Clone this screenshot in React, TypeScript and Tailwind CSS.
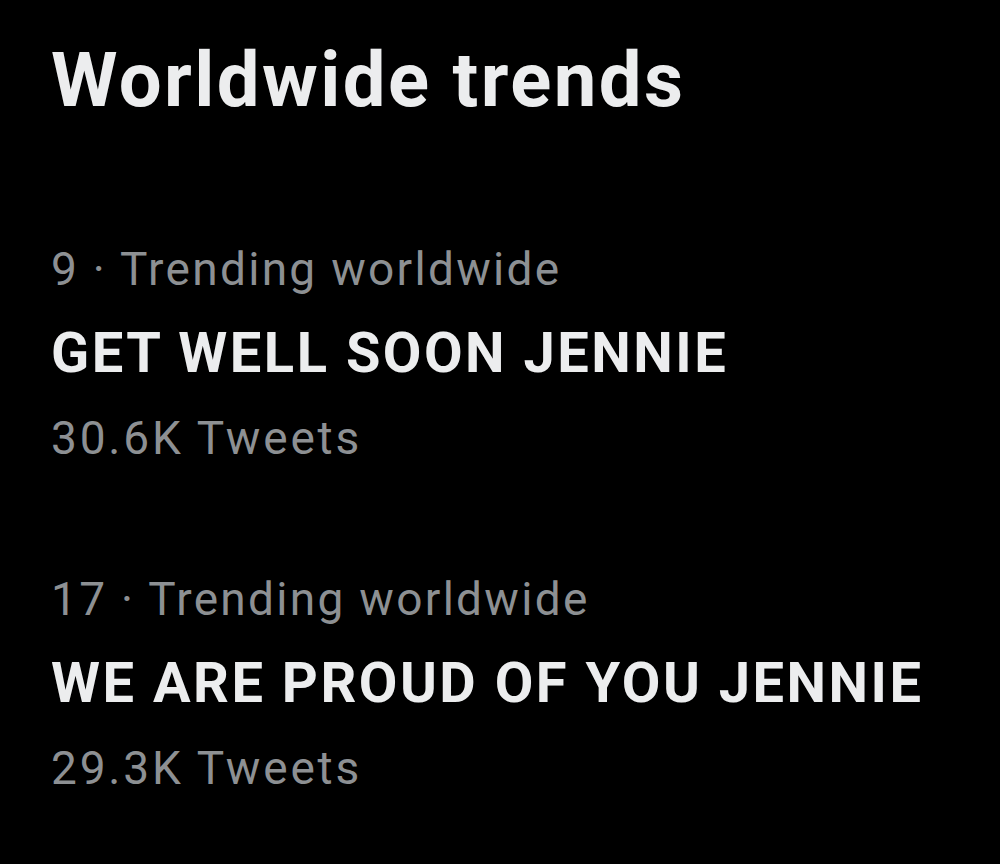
const trends = [
  { rank: 9, name: "GET WELL SOON JENNIE", count: "30.6K" },
  { rank: 17, name: "WE ARE PROUD OF YOU JENNIE", count: "29.3K" },
];

function TrendItem({ rank, name, count, first }: { rank: number; name: string; count: string; first?: boolean }) {
  return (
    <div className={first ? "mt-[129px]" : "mt-[117px]"}>
      <div className="text-[46px] leading-[44px] tracking-[2.3px] text-[#8d9093] whitespace-nowrap">
        {rank} · Trending worldwide
      </div>
      <div className="mt-[34px] text-[56px] leading-[56px] tracking-[2.5px] font-bold text-[#ecedee] whitespace-nowrap">
        {name}
      </div>
      <div className="mt-[35px] text-[46px] leading-[44px] tracking-[2.8px] text-[#8d9093] whitespace-nowrap">
        {count} Tweets
      </div>
    </div>
  );
}

export default function App() {
  return (
    <div
      className="w-[1000px] h-[864px] bg-black pl-[51px] pt-[42px] overflow-hidden"
      style={{ fontFamily: "Roboto, 'Liberation Sans', sans-serif" }}
    >
      <h1 className="text-[76px] leading-[76px] tracking-[2.4px] font-bold text-[#ecedee] whitespace-nowrap">
        Worldwide trends
      </h1>
      {trends.map((t, i) => (
        <TrendItem key={t.rank} {...t} first={i === 0} />
      ))}
    </div>
  );
}
